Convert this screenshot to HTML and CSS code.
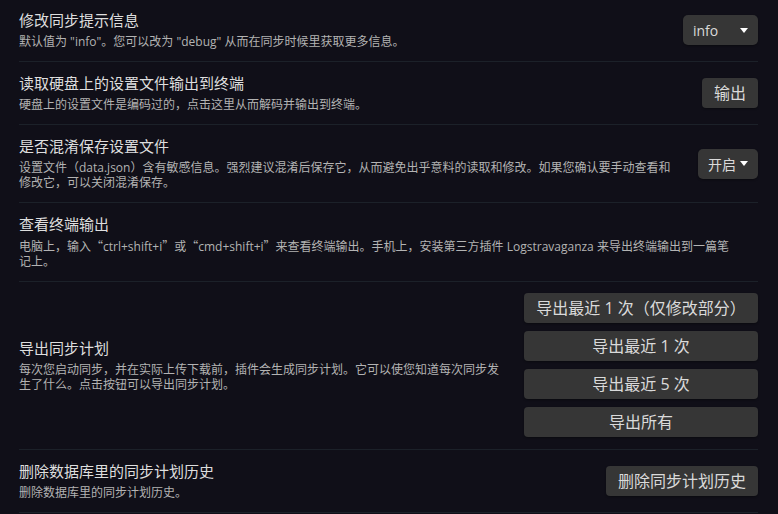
FILE: index.html
```html
<!DOCTYPE html>
<html lang="zh-CN">
<head>
<meta charset="utf-8">
<title>设置</title>
<link rel="stylesheet" href="styles.css">
</head>
<body>
<div class="settings">
  <div class="item">
    <div class="info">
      <div class="name">修改同步提示信息</div>
      <div class="desc">默认值为 "info"。您可以改为 "debug" 从而在同步时候里获取更多信息。</div>
    </div>
    <div class="control">
      <div class="dropdown dd-wide"><span>info</span><svg class="caret" width="8" height="5" viewBox="0 0 8 5"><polygon points="0,0 8,0 4,5" fill="#ffffff"/></svg></div>
    </div>
  </div>
  <div class="item">
    <div class="info">
      <div class="name">读取硬盘上的设置文件输出到终端</div>
      <div class="desc">硬盘上的设置文件是编码过的，点击这里从而解码并输出到终端。</div>
    </div>
    <div class="control">
      <button class="btn">输出</button>
    </div>
  </div>
  <div class="item">
    <div class="info">
      <div class="name">是否混淆保存设置文件</div>
      <div class="desc">设置文件（data.json）含有敏感信息。强烈建议混淆后保存它，从而避免出乎意料的读取和修改。如果您确认要手动查看和修改它，可以关闭混淆保存。</div>
    </div>
    <div class="control">
      <div class="dropdown dd-narrow"><span>开启</span><svg class="caret" width="8" height="5" viewBox="0 0 8 5"><polygon points="0,0 8,0 4,5" fill="#ffffff"/></svg></div>
    </div>
  </div>
  <div class="item">
    <div class="info">
      <div class="name">查看终端输出</div>
      <div class="desc">电脑上，输入<span class="q">“</span>ctrl+shift+i<span class="q">”</span>或<span class="q">“</span>cmd+shift+i<span class="q">”</span>来查看终端输出。手机上，安装第三方插件 Logstravaganza 来导出终端输出到一篇笔<span class="nw">记上。</span></div>
    </div>
  </div>
  <div class="item item-tall">
    <div class="info">
      <div class="name">导出同步计划</div>
      <div class="desc">每次您启动同步，并在实际上传下载前，插件会生成同步计划。它可以使您知道每次同步发生了什么。点击按钮可以导出同步计划。</div>
    </div>
    <div class="control">
      <div class="stack">
        <button class="btn">导出最近 1 次（仅修改部分）</button>
        <button class="btn">导出最近 1 次</button>
        <button class="btn">导出最近 5 次</button>
        <button class="btn">导出所有</button>
      </div>
    </div>
  </div>
  <div class="item">
    <div class="info">
      <div class="name">删除数据库里的同步计划历史</div>
      <div class="desc">删除数据库里的同步计划历史。</div>
    </div>
    <div class="control">
      <button class="btn">删除同步计划历史</button>
    </div>
  </div>
</div>
</body>
</html>
```
FILE: styles.css
```css
html, body {
  margin: 0;
  padding: 0;
  background: #100f18;
}
body {
  font-family: "Open Sans", "Noto Sans CJK SC", sans-serif;
  color: #dadada;
  width: 778px;
  height: 514px;
  overflow: hidden;
}
.settings {
  padding: 0 20px 0 19px;
}
.item {
  display: flex;
  align-items: center;
  padding: 12px 0;
  border-top: 1px solid #1c2129;
}
.item:first-child {
  border-top: none;
  padding-top: 11px;
}
.item:last-child {
  border-bottom: 1px solid #1c2129;
}
.item-tall {
  padding: 11px 0 12px;
}
.info {
  flex: 1 1 auto;
  margin-right: 16px;
  min-width: 0;
}
.name {
  font-size: 15px;
  line-height: 19px;
  color: #dedede;
}
.desc {
  font-size: 12px;
  line-height: 15px;
  padding-top: 4px;
  color: #b3b3b3;
}
.q {
  font-family: "Noto Sans CJK SC", sans-serif;
}
.nw {
  white-space: nowrap;
}
.control {
  flex: 0 0 auto;
  display: flex;
  align-items: center;
  justify-content: flex-end;
}
.btn {
  font-family: "Open Sans", "Noto Sans CJK SC", sans-serif;
  font-size: 16px;
  color: #dadada;
  background: #363636;
  border: none;
  border-radius: 4px;
  height: 30px;
  padding: 0 12px;
  line-height: 30px;
  box-shadow: 0 1px 2px rgba(0, 0, 0, 0.35);
  white-space: nowrap;
  cursor: pointer;
}
.stack {
  display: flex;
  flex-direction: column;
  gap: 8px;
  width: 234px;
}
.stack .btn {
  width: 100%;
}
.dropdown {
  box-sizing: border-box;
  height: 30px;
  display: flex;
  align-items: center;
  justify-content: space-between;
  padding: 0 10px 0 10px;
  background: #363636;
  border-radius: 5px;
  font-size: 14px;
  color: #dadada;
  box-shadow: 0 1px 2px rgba(0, 0, 0, 0.35);
}
.dd-wide {
  width: 75px;
}
.dd-narrow {
  width: 60px;
}
.caret {
  display: block;
  flex: none;
}
```
